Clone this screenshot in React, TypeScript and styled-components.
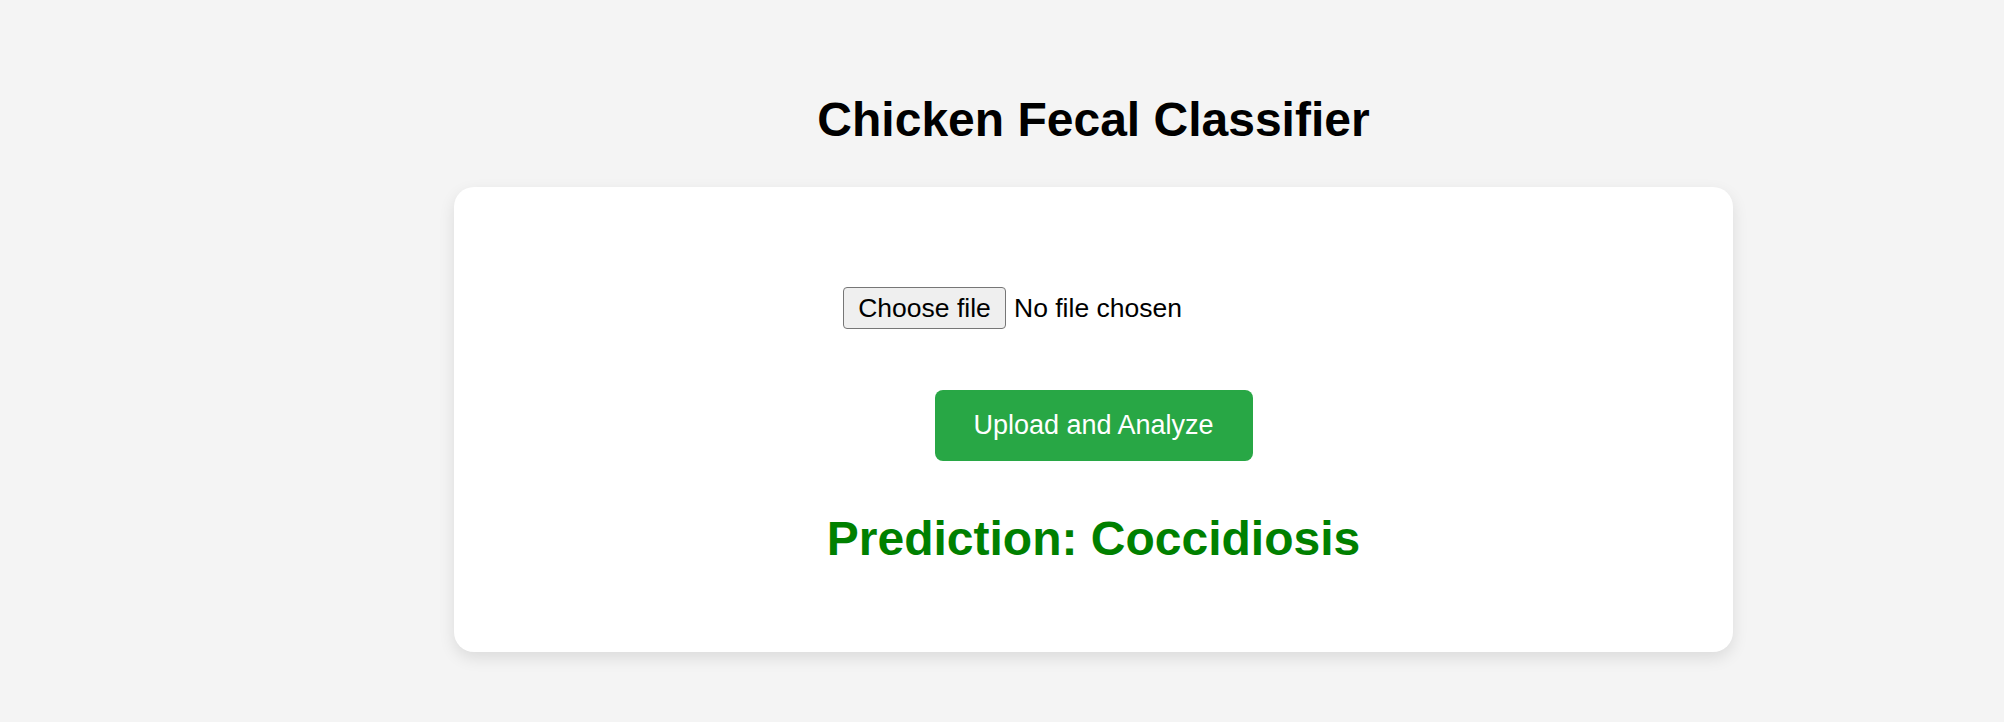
import React from "react";
import styled, { createGlobalStyle } from "styled-components";

const Global = createGlobalStyle`
  html, body {
    margin: 0;
    padding: 0;
    background: #f4f4f4;
  }
  body {
    font-family: "Liberation Sans", Arial, Helvetica, sans-serif;
    color: #000;
  }
`;

const Page = styled.div`
  min-height: 722px;
  padding-top: 92px;
  box-sizing: border-box;
`;

const Main = styled.main`
  width: 1279px;
  margin-left: 454px;
  display: flex;
  flex-direction: column;
  align-items: center;
`;

const Title = styled.h1`
  margin: 0 0 39px;
  font-family: "Liberation Sans", Arial, sans-serif;
  font-size: 48px;
  line-height: 56px;
  font-weight: 700;
  color: #000;
  text-align: center;
`;

const Card = styled.section`
  width: 100%;
  height: 465px;
  box-sizing: border-box;
  background: #fff;
  border-radius: 20px;
  box-shadow: 0 6px 16px rgba(0, 0, 0, 0.1);
  padding-top: 100px;
  display: flex;
  flex-direction: column;
  align-items: center;
`;

const FileRow = styled.label`
  width: 501px;
  height: 42px;
  display: flex;
  align-items: center;
  font-family: "Liberation Sans", Arial, sans-serif;
  font-size: 26.5px;
  cursor: pointer;
`;

const HiddenInput = styled.input`
  display: none;
`;

const FileButton = styled.span`
  width: 163px;
  height: 42px;
  box-sizing: border-box;
  display: flex;
  align-items: center;
  justify-content: center;
  background: #efefef;
  border: 1.5px solid #767676;
  border-radius: 4px;
  color: #000;
`;

const FileName = styled.span`
  margin-left: 8px;
  color: #000;
`;

const SubmitButton = styled.button`
  margin-top: 61px;
  width: 318px;
  height: 71px;
  border: none;
  border-radius: 8px;
  background: #28a745;
  color: #fff;
  font-family: "Liberation Sans", Arial, sans-serif;
  font-size: 27px;
  cursor: pointer;
  padding: 0;
`;

const Prediction = styled.h2`
  margin: 50px 0 0;
  font-family: "Liberation Sans", Arial, sans-serif;
  font-size: 48px;
  line-height: 56px;
  font-weight: 700;
  color: #008000;
  text-align: center;
`;

export default function App() {
  return (
    <>
      <Global />
      <Page>
        <Main>
          <Title>Chicken Fecal Classifier</Title>
          <Card>
            <FileRow>
              <HiddenInput type="file" />
              <FileButton>Choose file</FileButton>
              <FileName>No file chosen</FileName>
            </FileRow>
            <SubmitButton type="button">Upload and Analyze</SubmitButton>
            <Prediction>Prediction: Coccidiosis</Prediction>
          </Card>
        </Main>
      </Page>
    </>
  );
}
